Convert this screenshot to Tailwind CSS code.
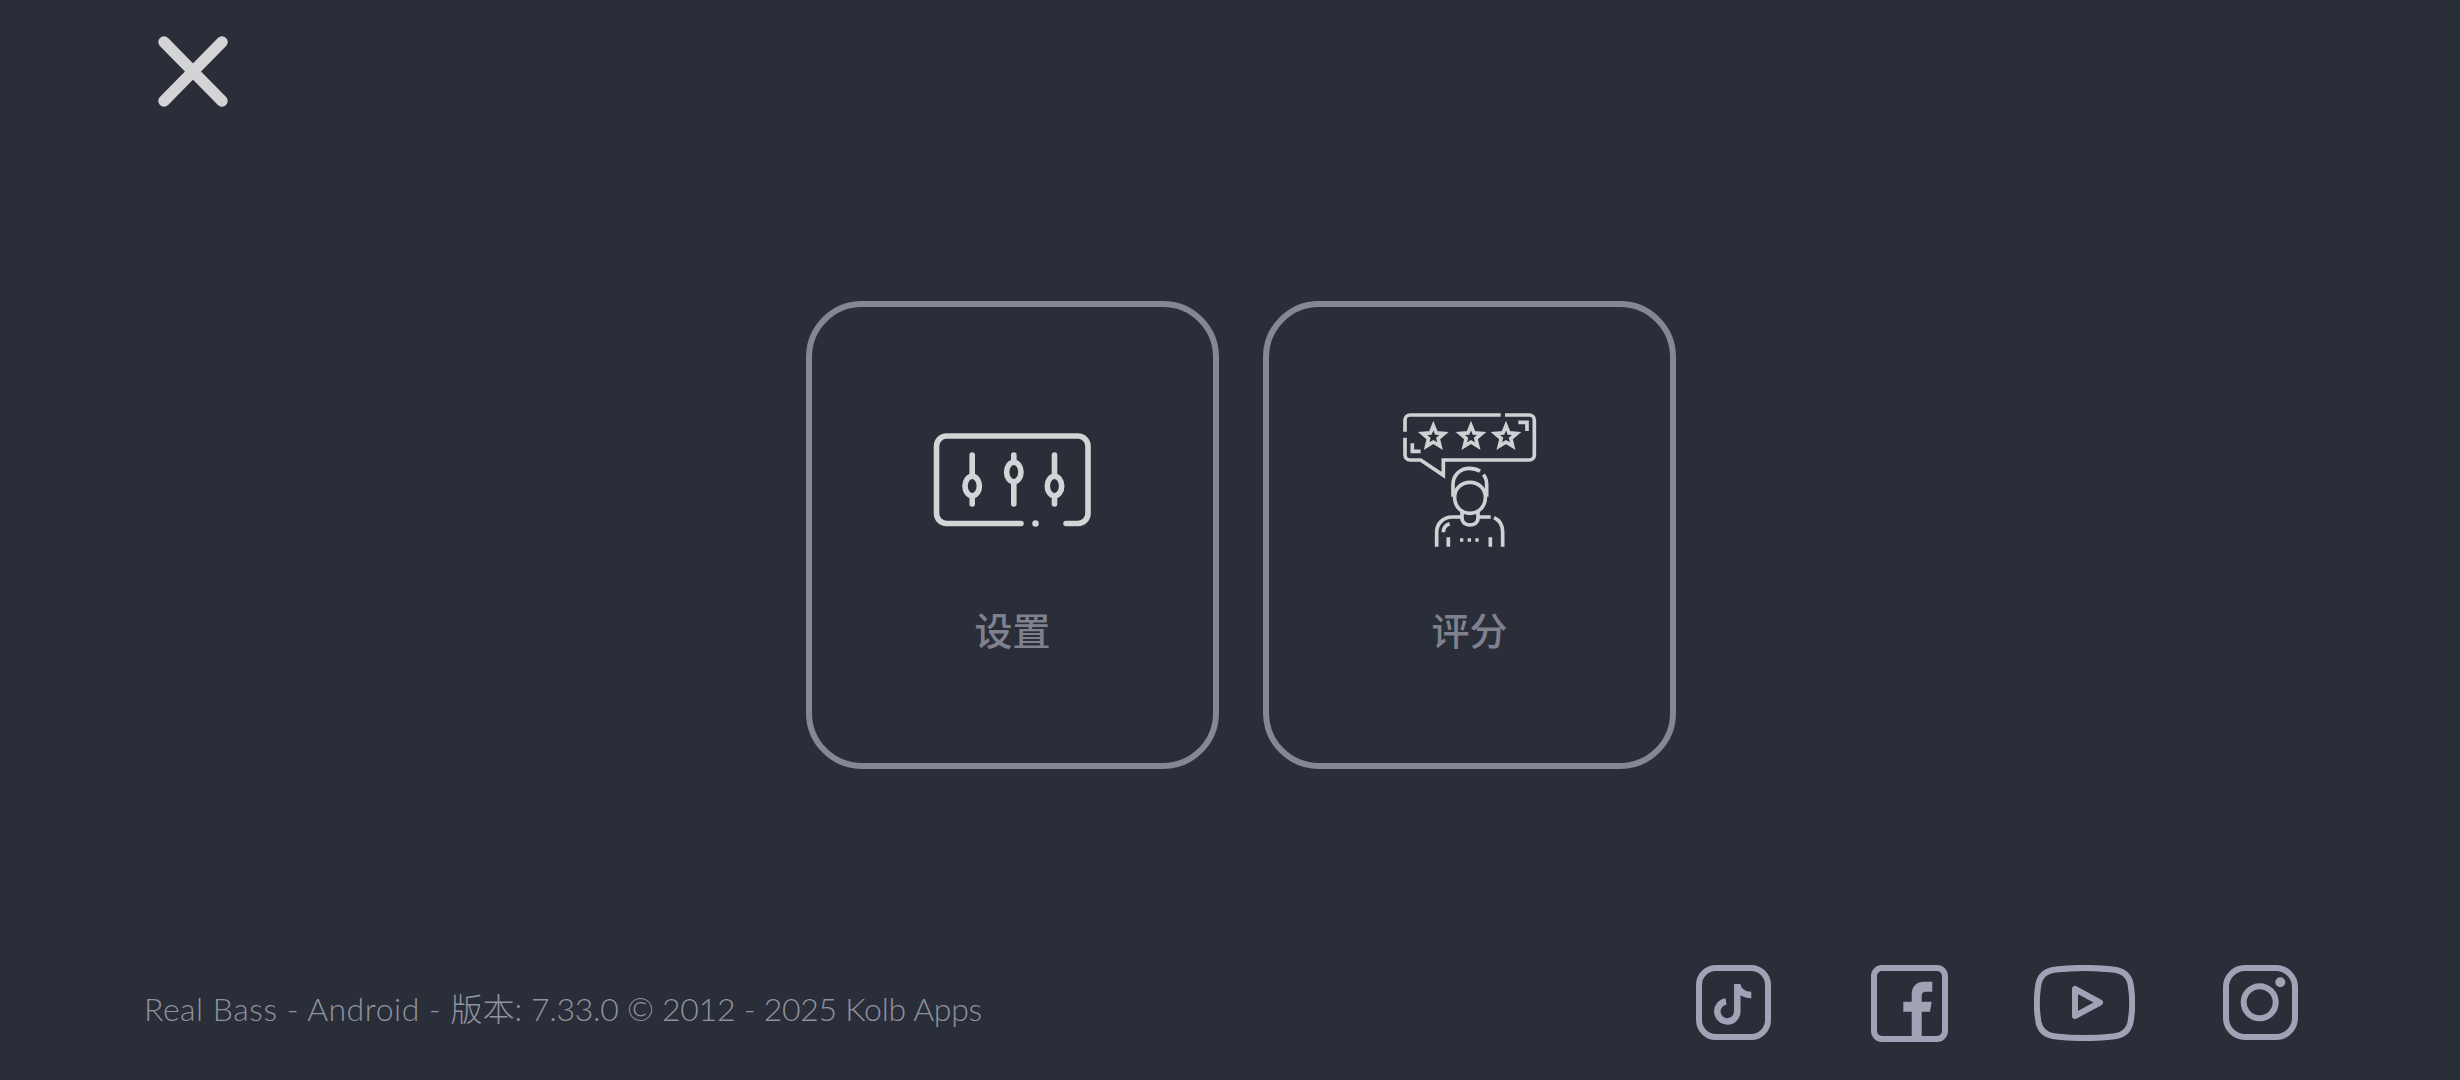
<!DOCTYPE html>
<html lang="zh-CN">
<head>
<meta charset="utf-8">
<title>Real Bass</title>
<script src="https://cdn.jsdelivr.net/npm/@tailwindcss/browser@4"></script>
</head>
<body class="bg-[#2a2e39]">
<div class="w-[2460px] h-[1080px] overflow-hidden bg-[#2a2e39] flex flex-col font-['Lato','Noto_Sans_CJK_SC',sans-serif]">
  <header class="h-[110px] pt-[33px] pl-[155px] shrink-0">
    <svg class="block w-[76px] h-[77px]" viewBox="0 0 76 77" fill="none" stroke="#d4d4d6" stroke-width="11.5" stroke-linecap="round"><path d="M9 9 L67 68 M67 9 L9 68"/></svg>
  </header>

  <main class="mt-[191px] pl-[806px] flex gap-[44px] shrink-0">
    <div class="w-[413px] h-[468px] border-[6px] border-[#858793] rounded-[56px] flex flex-col items-center pt-[73px]">
      <div class="h-[200px] flex items-center justify-center">
        <svg class="block w-[160px] h-[100px]" viewBox="0 -2 160 100" fill="none" stroke="#d3d4d6" stroke-width="5.6" stroke-linecap="round">
          <path d="M88 91.5 H13.5 a10 10 0 0 1 -10 -10 V14 a10 10 0 0 1 10 -10 H145 a10 10 0 0 1 10 10 V81.5 a10 10 0 0 1 -10 10 H133"/>
          <path d="M39.2 23 V44 M39.2 64 V72 M80.8 23 V30 M80.8 50 V72 M121.5 23 V44 M121.5 64 V72"/>
          <ellipse cx="39.2" cy="54" rx="7.2" ry="9.7"/>
          <ellipse cx="80.8" cy="40" rx="7.2" ry="9.7"/>
          <ellipse cx="121.5" cy="54" rx="7.2" ry="9.7"/>
          <circle cx="102.5" cy="91.5" r="3.2" fill="#d3d4d6" stroke="none"/>
        </svg>
      </div>
      <span class="mt-[24px] h-[50px] leading-[50px] text-[38px] font-medium text-[#7f818e] font-['Noto_Sans_CJK_SC',sans-serif]">设置</span>
    </div>

    <div class="w-[413px] h-[468px] border-[6px] border-[#858793] rounded-[56px] flex flex-col items-center pt-[73px]">
      <div class="h-[200px] flex items-center justify-center">
        <svg class="block w-[180px] h-[160px]" viewBox="0 0 540 480" fill="none" stroke="#d0d1d3" stroke-width="11">
          <defs><polygon id="star" points="0,-34 8.9,-12.2 32.3,-10.5 14.4,4.6 20,27.5 0,15.1 -20,27.5 -14.4,4.6 -32.3,-10.5 -8.9,-12.2"/></defs>
          <path d="M75 95 V60 a15 15 0 0 1 15 -15 H362 M375 45 H448 a15 15 0 0 1 15 15 V165 a15 15 0 0 1 -15 15 H190 V226 L122 180 H90 a15 15 0 0 1 -15 -15 V113"/>
          <path d="M415 67 H441 V93 M97 130 V154 H122"/>
          <use href="#star" x="160" y="111"/>
          <use href="#star" x="273" y="111"/>
          <use href="#star" x="378" y="111"/>
          <path d="M300 214 C290 207 280 205 268 205 C240 205 219 226 219 254 V290"/>
          <path d="M310 224 C317 232 320 242 320 254 V290"/>
          <path d="M224 296 C222 266 244 247 270 247 C296 247 318 266 316 296 C314 322 294 340 270 340 C246 340 226 322 224 296Z"/>
          <path d="M246 332 V354 C246 382 294 382 294 354 V332"/>
          <path d="M246 351 H216 C190 351 170 371 170 397 V440 M294 351 H332 M342 353 C358 360 368 376 368 397 V440"/>
          <path d="M190 397 C190 384 197 375 209 371 M205 412 V440 M331 412 V440 M240 420 H250 M263 420 H273 M286 420 H296"/>
        </svg>
      </div>
      <span class="mt-[24px] h-[50px] leading-[50px] text-[38px] font-medium text-[#7f818e] font-['Noto_Sans_CJK_SC',sans-serif]">评分</span>
    </div>
  </main>

  <footer class="mt-[196px] pl-[144px] pr-[162px] flex items-start justify-between shrink-0">
    <p class="mt-[20px] text-[32px] leading-[48px] font-light text-[#90929f] whitespace-nowrap"><span class="tracking-[0.5px]">Real Bass - Android - </span>版本: <span class="tracking-[-0.26px]">7.33.0 © 2012 - 2025 Kolb Apps</span></p>
    <div class="flex items-start">
      <svg class="block w-[75px] h-[75px] mr-[100px]" viewBox="0 0 75 75" fill="none" stroke="#a0a3b5" stroke-width="6">
        <rect x="3" y="3" width="69" height="69" rx="17"/>
        <path d="M30 36.5 a10 10 0 1 0 11.3 10 V19 c0 6 6 11 14 11" stroke-width="6.5"/>
      </svg>
      <svg class="block w-[77px] h-[77px] mr-[86px]" viewBox="0 0 77 77" fill="none" stroke="#a0a3b5" stroke-width="6">
        <rect x="3" y="3" width="71" height="71" rx="8"/>
        <path fill="#a0a3b5" stroke="none" d="M40.7 74 V46.7 H32.3 V36.7 H40.7 V29 C40.7 21 46 16.7 53 16.7 H61.3 V26.7 H55 C52 26.7 50.7 28 50.7 31 V36.7 H60.7 L59 46.7 H50.7 V74 Z"/>
      </svg>
      <svg class="block w-[101px] h-[76px] mr-[88px]" viewBox="0 0 101 76" fill="none" stroke="#a0a3b5" stroke-width="6" stroke-linejoin="round">
        <path d="M22 4.5 C40 2.5 61 2.5 79 4.5 C90 5.5 96 11 97 22 C98.5 32 98.5 44 97 54 C96 65 90 70.5 79 71.5 C61 73.5 40 73.5 22 71.5 C11 70.5 5 65 4 54 C2.5 44 2.5 32 4 22 C5 11 11 5.5 22 4.5Z"/>
        <path d="M41 24 V51 L66 37.5 Z"/>
      </svg>
      <svg class="block w-[75px] h-[75px]" viewBox="0 0 75 75" fill="none" stroke="#a0a3b5" stroke-width="6">
        <rect x="3" y="3" width="69" height="69" rx="19"/>
        <circle cx="36.7" cy="37.3" r="16"/>
        <circle cx="57.3" cy="17.3" r="5" fill="#a0a3b5" stroke="none"/>
      </svg>
    </div>
  </footer>
</div>
</body>
</html>
